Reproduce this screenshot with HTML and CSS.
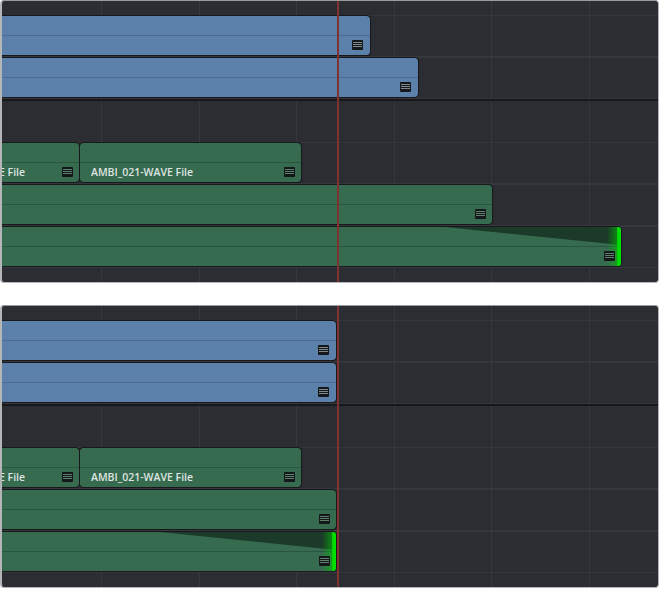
FILE: index.html
```html
<!DOCTYPE html>
<html lang="en">
<head>
    <meta charset="UTF-8">
    <title>Timeline trim</title>
    <link rel="stylesheet" href="styles.css">
</head>
<body>

<div class="panel">
    <div class="grid"><span></span><span></span><span></span><span></span><span></span><span></span></div>
    <div class="track_group">
        <div class="track"><div class="clip blue w_380"><span class="menu"><i></i></span></div></div>
        <div class="track"><div class="clip blue w_428"><span class="menu"><i></i></span></div></div>
    </div>
    <div class="track_group audio">
        <div class="track">
            <div class="clip green first_clip"><span class="label">AMBI_020-WAVE File</span><span class="menu"><i></i></span></div>
            <div class="clip green w_221"><span class="label">AMBI_021-WAVE File</span><span class="menu"><i></i></span></div>
        </div>
        <div class="track"><div class="clip green w_502"><span class="menu"><i></i></span></div></div>
        <div class="track">
            <div class="clip green w_631">
                <div class="fade"></div>
                <div class="glow"></div>
                <span class="menu"><i></i></span>
            </div>
        </div>
    </div>
    <div class="playhead"></div>
</div>

<div class="panel">
    <div class="grid"><span></span><span></span><span></span><span></span><span></span><span></span></div>
    <div class="track_group">
        <div class="track"><div class="clip blue w_346"><span class="menu"><i></i></span></div></div>
        <div class="track"><div class="clip blue w_346"><span class="menu"><i></i></span></div></div>
    </div>
    <div class="track_group audio">
        <div class="track">
            <div class="clip green first_clip"><span class="label">AMBI_020-WAVE File</span><span class="menu"><i></i></span></div>
            <div class="clip green w_221"><span class="label">AMBI_021-WAVE File</span><span class="menu"><i></i></span></div>
        </div>
        <div class="track"><div class="clip green w_346"><span class="menu"><i></i></span></div></div>
        <div class="track">
            <div class="clip green w_346">
                <div class="fade"></div>
                <div class="glow"></div>
                <span class="menu"><i></i></span>
            </div>
        </div>
    </div>
    <div class="playhead"></div>
</div>

</body>
</html>
```

FILE: styles.css
```css
body {
  margin: 0;
  background: #fff;
  font-family: "Open Sans", sans-serif;
}

.panel {
  position: relative;
  box-sizing: border-box;
  width: 659px;
  height: 283px;
  margin: 0 0 22px 0;
  padding-top: 15px;
  overflow: hidden;
  border-radius: 4px;
  border: 1px solid #b4b5b7;
  border-top: 1px solid #9a9b9e;
  border-left-width: 2px;
  background-color: #2c2d32;
}

/* vertical grid lines of the timeline */
.grid {
  position: absolute;
  left: 2.5px;
  top: 0;
  bottom: 0;
  display: flex;
}

.grid span {
  flex: none;
  box-sizing: border-box;
  width: 97.5px;
  border-right: 1px solid #37383d;
}

.track_group {
  position: relative;
  display: flex;
  flex-direction: column;
  gap: 2px;
  padding-bottom: 1px;
  border-bottom: 2px solid #17181a;
}

.track_group.audio {
  margin-top: 42px;
  padding-bottom: 0;
  border-bottom: 0;
}

.track {
  display: flex;
  gap: 1px;
  height: 40px;
  margin-left: -12px;
  box-shadow: 0 -1px 0 #36373c, 0 1px 0 #36373c;
}

.clip {
  position: relative;
  flex: none;
  box-sizing: border-box;
  height: 39px;
  border-radius: 3px;
  overflow: hidden;
  outline: 1px solid #17191b;
}

.clip:after {
  content: "";
  position: absolute;
  left: 0;
  right: 0;
  top: 19px;
  height: 1px;
}

.blue { background: #5b80aa; }
.blue:after { background: #4a6c92; }
.green { background: #366b4f; }
.green:after { background: #2a5641; }

.w_380 { width: 380px; }
.w_428 { width: 428px; }
.w_346 { width: 346px; }
.w_221 { width: 221px; }
.w_502 { width: 502px; }
.w_631 { width: 631px; }

.first_clip {
  width: 168px;
  margin-left: -79px;
}

.label {
  position: absolute;
  left: 11px;
  top: 22px;
  z-index: 1;
  color: #dfe3e1;
  font-size: 10.5px;
  font-weight: 600;
  line-height: 15px;
  white-space: nowrap;
}

.first_clip .label { left: 12px; }

/* small menu icon in the corner of a clip */
.menu {
  position: absolute;
  right: 7px;
  bottom: 5px;
  z-index: 2;
  box-sizing: border-box;
  width: 11px;
  height: 10px;
  padding: 2px 1px;
  background: #14181b;
  border-radius: 1px;
}

.green .menu { right: 6px; }

.menu i {
  display: block;
  height: 6px;
  background: repeating-linear-gradient(to bottom, #7f8a8d 0, #7f8a8d 1px, transparent 1px, transparent 2px);
}

.green .menu i {
  background: repeating-linear-gradient(to bottom, #5d7f6c 0, #5d7f6c 1px, transparent 1px, transparent 2px);
}

.fade {
  position: absolute;
  right: 0;
  top: 0;
  width: 176px;
  height: 18px;
  background: #1c3a2a;
  clip-path: polygon(0 0, 100% 0, 100% 100%);
}

.glow {
  position: absolute;
  right: 0;
  top: 0;
  bottom: 0;
  z-index: 1;
  width: 14px;
  background: linear-gradient(to right, rgba(0, 224, 0, 0) 0, rgba(0, 190, 0, .55) 68%, #00d800 76%, #00e400 100%);
}

.playhead {
  position: absolute;
  left: 335px;
  top: 0;
  bottom: 0;
  width: 2px;
  background: #7f3230;
}
```
